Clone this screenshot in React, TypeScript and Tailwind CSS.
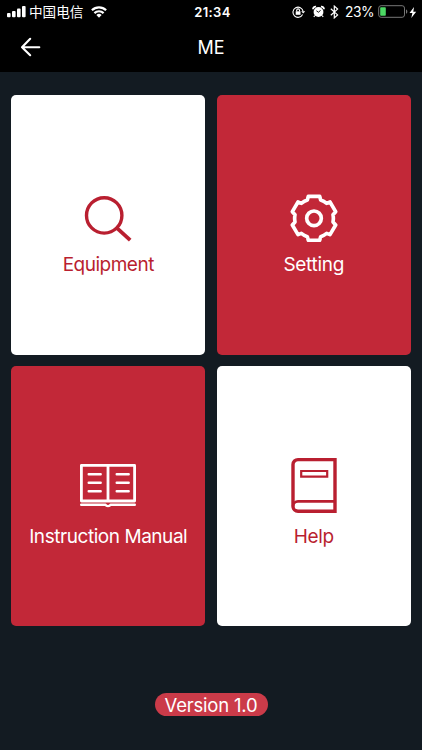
import type { ReactNode } from "react";
import clsx from "clsx";

function StatusBar() {
  return (
    <div className="grid h-6 grid-cols-3 items-center text-white">
      <div className="flex items-center pl-[7px]">
        <svg width="19" height="12" viewBox="0 0 19 12" fill="currentColor">
          <rect x="0" y="7" width="3.6" height="4.2" rx="1" />
          <rect x="5" y="5" width="3.6" height="6.2" rx="1" />
          <rect x="10" y="2.6" width="3.6" height="8.6" rx="1" />
          <rect x="15" y="0" width="3.6" height="11.2" rx="1" />
        </svg>
        <span className="ml-[3px] text-[13.6px] leading-6 whitespace-nowrap">中国电信</span>
        <svg className="mb-px ml-2" width="16" height="12" viewBox="0 0 16 12" fill="none" stroke="currentColor" strokeWidth="2.2">
          <path d="M0.9 4.3a10.2 10.2 0 0 1 14.2 0" />
          <path d="M3.4 7.1a6.6 6.6 0 0 1 9.2 0" />
          <path d="M8 11.7L5.4 9.1a3.7 3.7 0 0 1 5.2 0z" fill="currentColor" stroke="none" />
        </svg>
      </div>

      <span className="pt-px pl-[3px] text-center text-[13px] font-semibold tracking-[0.4px]">21:34</span>

      <div className="flex items-center justify-end pr-[5px]">
        <svg width="14" height="12" viewBox="0 0 14 12" fill="none" stroke="currentColor" strokeWidth="1.1">
          <path d="M10.6 8.6a5.1 5.1 0 1 1 .5-3.2" />
          <path d="M9.2 5.2h4l-2 2.4z" fill="currentColor" stroke="none" />
          <rect x="3.7" y="5.3" width="4.8" height="3.5" fill="currentColor" stroke="none" />
          <path d="M4.7 5.5V4.3a1.4 1.4 0 0 1 2.8 0v1.2" />
        </svg>
        <svg className="mb-px ml-[6px]" width="13" height="13" viewBox="0 0 13 13" fill="none">
          <circle cx="6.5" cy="7" r="4.9" fill="currentColor" />
          <path d="M1 4.2a2.6 2.6 0 0 1 3-2.6M12 4.2a2.6 2.6 0 0 0-3-2.6" stroke="currentColor" strokeWidth="1.8" />
          <path d="M2.8 10.6l-1 1.3M10.2 10.6l1 1.3" stroke="currentColor" strokeWidth="1.1" />
          <path d="M4.4 5.8l2.2 1.5L8.5 5.2" stroke="#000" strokeWidth="0.9" />
        </svg>
        <svg className="ml-[5px]" width="9" height="14" viewBox="0 0 9 14" fill="none" stroke="currentColor" strokeWidth="1.2">
          <path d="M0.8 3.8l6.8 6.1-3.3 3V1.1l3.3 3L0.8 10.2" />
        </svg>
        <span className="ml-[6px] text-[13.8px] leading-6 tracking-[-0.5px]">23%</span>
        <svg className="mb-px ml-[4px]" width="30" height="13" viewBox="0 0 30 13">
          <rect x="0.7" y="0.7" width="25.8" height="11.6" rx="2.4" fill="none" stroke="#777" />
          <rect x="2.2" y="2.2" width="5.6" height="8.6" rx="0.8" fill="#4cd964" />
          <path d="M28 4.4c1.8.5 1.8 3.7 0 4.2z" fill="#777" />
        </svg>
        <svg className="ml-px" width="8" height="11" viewBox="0 0 8 11" fill="currentColor">
          <path d="M5 0L0.5 6h2.9L2.3 11 7.2 4.7H4.3z" />
        </svg>
      </div>
    </div>
  );
}

function NavBar() {
  return (
    <div className="grid h-[46px] grid-cols-3 items-center text-white">
      <button className="ml-5 w-fit" aria-label="Back">
        <svg width="21" height="20" viewBox="0 0 21 20" fill="none" stroke="currentColor" strokeWidth="2.1" strokeLinecap="round" strokeLinejoin="round">
          <path d="M10.2 1.8L2 10.2l8.2 8M2 10.2h17.3" />
        </svg>
      </button>
      <h1 className="text-center text-[18px]">ME</h1>
    </div>
  );
}

function SearchIcon() {
  return (
    <svg width="48" height="48" viewBox="0 0 48 48" fill="none" stroke="currentColor" strokeWidth="3.4">
      <circle cx="20.2" cy="21.4" r="17.7" />
      <path d="M33 34.2l13.2 12" strokeWidth="3.8" />
    </svg>
  );
}

function GearIcon() {
  return (
    <svg width="48" height="48" viewBox="-72 -73 144 144" fill="none" stroke="currentColor" strokeWidth="11" strokeLinejoin="round">
      <path d="M-17-66H17L20-55A58 58 0 0 1 38-45L48-49 65-20 57-11A58 58 0 0 1 57 11L65 20 48 49 38 45A58 58 0 0 1 20 55L17 66H-17L-20 55A58 58 0 0 1-38 45L-48 49-65 20-57 11A58 58 0 0 1-57-11L-65-20-48-49-38-45A58 58 0 0 1-20-55Z" />
      <circle r="22" />
    </svg>
  );
}

function ManualIcon() {
  return (
    <svg width="58" height="46" viewBox="0 0 58 46" fill="none" stroke="currentColor" strokeWidth="2.8" strokeLinecap="round" strokeLinejoin="round">
      <path d="M2.4 2.4h53.2V38H2.4zM29 2.4V38" />
      <path d="M9.7 11.3h12M9.7 19.8h12M9.7 28.3h12M37.7 11.3h12M37.7 19.8h12M37.7 28.3h12" strokeWidth="2.4" />
      <path d="M2.2 41.8h24.3a2.7 2.2 0 0 0 5 0h24.3" strokeWidth="2.4" />
    </svg>
  );
}

function HelpIcon() {
  return (
    <svg width="48" height="56" viewBox="0 0 48 56" fill="none" stroke="currentColor" strokeWidth="3.4">
      <path d="M8 2.6h37v51.6H8a5 5 0 0 1-5-5V7.6a5 5 0 0 1 5-5z" />
      <path d="M3 49.2a5 5 0 0 1 5-4.8h37" strokeWidth="2.6" />
      <path d="M11.2 14h26v5.6h-26z" strokeWidth="2.2" />
    </svg>
  );
}

type TileProps = {
  label: string;
  filled?: boolean;
  className: string;
  labelClass: string;
  children: ReactNode;
};

function Tile({ label, filled, className, labelClass, children }: TileProps) {
  return (
    <button
      className={clsx(
        "flex h-[260px] flex-col items-center rounded-[5px]",
        filled ? "bg-[#c22838] text-white" : "bg-white text-[#b91f30]",
        className
      )}
    >
      {children}
      <span className={clsx("text-[19px] leading-6 whitespace-nowrap", labelClass)}>{label}</span>
    </button>
  );
}

export default function App() {
  return (
    <div className="flex h-[750px] w-[422px] flex-col bg-[#131b22] font-['Inter','Noto_Sans_CJK_SC',sans-serif]">
      <header className="h-[72px] bg-black">
        <StatusBar />
        <NavBar />
      </header>

      <main className="grid grid-cols-2 gap-[11.5px] px-[11.25px] pt-[22.5px]">
        <Tile label="Equipment" className="pt-[99px]" labelClass="mt-[11px] tracking-[-0.5px]">
          <SearchIcon />
        </Tile>
        <Tile label="Setting" filled className="pt-[99px]" labelClass="mt-[11px] tracking-[-0.3px]">
          <GearIcon />
        </Tile>
        <Tile label="Instruction Manual" filled className="pt-[97px]" labelClass="mt-4 tracking-[-0.45px]">
          <ManualIcon />
        </Tile>
        <Tile label="Help" className="pt-[91px]" labelClass="mt-3 tracking-[-0.4px]">
          <HelpIcon />
        </Tile>
      </main>

      <footer className="mt-[67px] flex justify-center">
        <span className="flex h-[23px] w-[113px] items-center justify-center rounded-full bg-[#cb3b49] pt-[2px] text-[18.5px] tracking-[-0.2px] whitespace-nowrap text-white">
          Version 1.0
        </span>
      </footer>
    </div>
  );
}
